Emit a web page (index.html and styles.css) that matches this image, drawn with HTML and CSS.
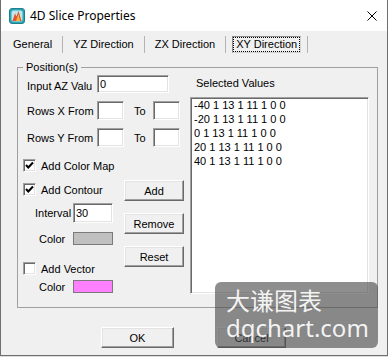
FILE: index.html
```html
<!DOCTYPE html>
<html lang="en">
<head>
  <meta charset="UTF-8" />
  <title>4D Slice Properties</title>
  <link rel="stylesheet" href="styles.css">
</head>
<body>

  <div class="window">
    <div class="titlebar">
      <svg class="app-icon" viewBox="0 0 16 16">
        <rect x="0.5" y="0.5" width="15" height="15" rx="2.5" fill="#2fa6b6" stroke="#1d7f8c"/>
        <rect x="2.5" y="2.5" width="11" height="11" rx="2" fill="#bfe6ea"/>
        <path d="M3.5 13 L6 5.5 L7.5 8.5 L9.5 3 L12.5 13 Z" fill="#e4532b"/>
        <path d="M7 13 L9.5 6 L11 13 Z" fill="#f6b73c"/>
      </svg>
      <span class="title">4D Slice Properties</span>
      <svg class="close" viewBox="0 0 10 10">
        <path d="M0.5 0.5 L9.5 9.5 M9.5 0.5 L0.5 9.5" stroke="#000" stroke-width="1" fill="none"/>
      </svg>
    </div>

    <div class="tabs">
      <span class="tab">General</span><span class="sep"></span>
      <span class="tab">YZ Direction</span><span class="sep"></span>
      <span class="tab">ZX Direction</span><span class="sep"></span>
      <span class="tab active"><span class="focus">XY Direction</span></span><span class="sep"></span>
    </div>

    <fieldset class="group">
      <legend>Position(s)</legend>

      <div class="left">
        <div class="row row-az">
          <label class="lbl lbl-az">Input AZ Valu</label>
          <input class="edit edit-az" type="text" value="0">
        </div>
        <div class="row row-range">
          <label class="lbl">Rows X From</label>
          <input class="edit edit-sm" type="text">
          <span class="to">To</span>
          <input class="edit edit-sm" type="text">
        </div>
        <div class="row row-range">
          <label class="lbl">Rows Y From</label>
          <input class="edit edit-sm" type="text">
          <span class="to">To</span>
          <input class="edit edit-sm" type="text">
        </div>

        <div class="lower">
          <div class="checks">
            <div class="chk-row">
              <span class="chk"><svg viewBox="0 0 11 11"><path d="M2 5 L4.3 7.5 L9 2.5" stroke="#000" stroke-width="2" fill="none"/></svg></span>
              <span>Add Color Map</span>
            </div>
            <div class="chk-row contour">
              <span class="chk"><svg viewBox="0 0 11 11"><path d="M2 5 L4.3 7.5 L9 2.5" stroke="#000" stroke-width="2" fill="none"/></svg></span>
              <span>Add Contour</span>
            </div>
            <div class="sub-row interval">
              <label class="sub-lbl lbl-interval">Interval</label>
              <input class="edit edit-interval" type="text" value="30">
            </div>
            <div class="sub-row swatch-row">
              <label class="sub-lbl lbl-color">Color</label>
              <span class="swatch swatch-gray"></span>
            </div>
            <div class="chk-row vector">
              <span class="chk"></span>
              <span>Add Vector</span>
            </div>
            <div class="sub-row swatch-row pink-row">
              <label class="sub-lbl lbl-color">Color</label>
              <span class="swatch swatch-pink"></span>
            </div>
          </div>

          <div class="btns">
            <button class="btn">Add</button>
            <button class="btn">Remove</button>
            <button class="btn">Reset</button>
          </div>
        </div>
      </div>

      <div class="right">
        <div class="list-title">Selected Values</div>
        <div class="listbox">
          <div>-40 1 13 1 11 1 0 0</div>
          <div>-20 1 13 1 11 1 0 0</div>
          <div>0 1 13 1 11 1 0 0</div>
          <div>20 1 13 1 11 1 0 0</div>
          <div>40 1 13 1 11 1 0 0</div>
        </div>
      </div>
    </fieldset>

    <div class="footer">
      <button class="btn btn-ok">OK</button>
      <button class="btn btn-cancel">Cancel</button>
    </div>

    <div class="watermark">
      <div class="wm-cn">大谦图表</div>
      <div class="wm-en">dqchart.com</div>
    </div>
  </div>

</body>
</html>
```

FILE: styles.css
```css
* {
  box-sizing: border-box;
}

body {
  margin: 0;
  background: #dcdcdc;
  font-family: "Liberation Sans", Arial, sans-serif;
  font-size: 11px;
  color: #000;
}

.window {
  position: relative;
  width: 388px;
  height: 356px;
  background: #f0f0f0;
  border: 1px solid #6f6f6f;
  border-top: 0;
}

/* title bar */
.titlebar {
  display: flex;
  align-items: center;
  height: 31px;
  padding: 0 10px 0 8px;
  background: #fff;
}

.app-icon {
  width: 16px;
  height: 16px;
}

.title {
  margin-left: 5px;
  font-family: "Noto Sans", sans-serif;
  font-size: 12px;
}

.close {
  margin-left: auto;
  width: 10px;
  height: 10px;
}

/* tabs */
.tabs {
  display: flex;
  height: 17px;
  margin-top: 5px;
  padding-left: 8px;
  line-height: 15px;
}

.tab {
  border: 1px solid transparent;
  padding: 0 3px;
  white-space: nowrap;
}

.tab.active {
  padding: 0;
  line-height: 13px;
  border-color: #8a8a8a #d4d4d4 #d4d4d4 #8a8a8a;
}

.focus {
  display: block;
  border: 1px dotted #000;
  padding: 0 2px;
}

.sep {
  width: 1px;
  margin: 0 6px;
  background: #b4b4b4;
}

/* group box */
.group {
  display: flex;
  width: 361px;
  height: 247px;
  min-width: 0;
  margin: 8px 0 0 16px;
  padding: 0 8px 0 5px;
  border: 1px solid #a0a0a0;
}

.group legend {
  padding: 0 3px;
  line-height: 13px;
}

.left {
  width: 167px;
}

.row {
  display: flex;
  align-items: center;
}

.row-az {
  height: 18px;
  margin-top: 1px;
}

.row-range {
  height: 19px;
  margin-top: 8px;
}

.lbl {
  width: 70px;
  margin-left: 4px;
  white-space: nowrap;
}

.lbl-az {
  padding-top: 3px;
}

.to {
  width: 19px;
  margin-left: 10px;
}

.edit {
  height: 100%;
  margin: 0;
  padding: 0 2px;
  font: inherit;
  background: #fff;
  border: 1px solid;
  border-color: #a0a0a0 #fff #fff #a0a0a0;
  box-shadow: inset 1px 1px 0 #696969, inset -1px -1px 0 #e3e3e3;
  outline: none;
}

.edit-az {
  width: 72px;
}

.edit-sm {
  width: 27px;
}

.edit-interval {
  width: 40px;
}

/* check boxes and buttons */
.lower {
  display: flex;
  margin-top: 12px;
}

.checks {
  width: 101px;
}

.chk-row {
  display: flex;
  align-items: center;
  gap: 5px;
  height: 13px;
}

.chk-row.contour {
  margin-top: 11px;
}

.chk-row.vector {
  margin-top: 17px;
}

.chk {
  width: 13px;
  height: 13px;
  background: #fff;
  border: 1px solid;
  border-color: #a0a0a0 #fff #fff #a0a0a0;
  box-shadow: inset 1px 1px 0 #696969, inset -1px -1px 0 #e3e3e3;
}

.chk svg {
  display: block;
  width: 11px;
  height: 11px;
}

.sub-row {
  display: flex;
  align-items: center;
}

.sub-row.interval {
  height: 20px;
  margin-top: 7px;
}

.swatch-row {
  height: 13px;
  margin-top: 9px;
}

.swatch-row.pink-row {
  margin-top: 5px;
}

.lbl-interval {
  width: 38px;
  margin-left: 12px;
}

.lbl-color {
  width: 34px;
  margin-left: 16px;
}

.swatch {
  width: 40px;
  height: 13px;
  border: 1px solid #7a7a7a;
}

.swatch-gray {
  background: #c0c0c0;
}

.swatch-pink {
  background: #ff80ff;
}

.btns {
  display: flex;
  flex-direction: column;
  gap: 12px;
  width: 60px;
  padding-top: 21px;
}

.btn {
  height: 21px;
  margin: 0;
  padding: 0;
  font: inherit;
  color: #000;
  background: #f0f0f0;
  border: 1px solid;
  border-color: #fff #696969 #696969 #fff;
  box-shadow: inset -1px -1px 0 #a0a0a0, inset 1px 1px 0 #e3e3e3;
}

/* list */
.right {
  width: 179px;
}

.list-title {
  margin-top: 3px;
  padding-left: 6px;
  line-height: 13px;
}

.listbox {
  height: 197px;
  margin-top: 7px;
  padding: 0 3px;
  line-height: 14px;
  background: #fff;
  border: 1px solid;
  border-color: #a0a0a0 #fff #fff #a0a0a0;
  box-shadow: inset 1px 1px 0 #696969, inset -1px -1px 0 #e3e3e3;
}

/* footer */
.footer {
  display: flex;
  gap: 43px;
  margin-top: 19px;
  padding-left: 100px;
}

.btn-ok {
  width: 73px;
}

.btn-cancel {
  width: 69px;
}

/* watermark */
.watermark {
  position: absolute;
  left: 214px;
  top: 282px;
  width: 163px;
  height: 66px;
  padding: 4px 0 0 11px;
  border-radius: 6px;
  background: rgba(72, 72, 72, 0.62);
  color: rgba(255, 255, 255, 0.92);
  font-family: "Noto Sans", "Noto Sans CJK SC", sans-serif;
  font-size: 24px;
  line-height: 28px;
}

.wm-cn {
  font-family: "Noto Sans CJK SC", sans-serif;
}
```
